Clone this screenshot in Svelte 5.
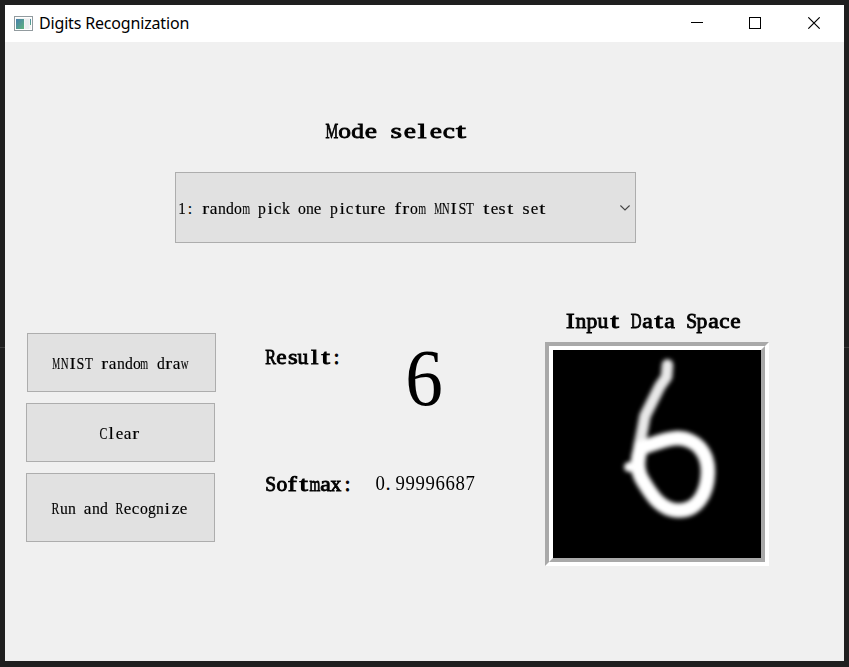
<script>
  // Monospaced serif lettering: every glyph sits centred in a fixed cell and
  // is scaled from its natural width (in em) to a share of that cell.
  const widths = {
    a: 0.444, c: 0.444, e: 0.444, z: 0.444, f: 0.333, r: 0.333, s: 0.389, i: 0.278, l: 0.278, t: 0.278,
    m: 0.778, w: 0.722, C: 0.667, D: 0.722, I: 0.333, M: 0.889, N: 0.722, R: 0.667, S: 0.556, T: 0.611,
    ' ': 0.25, '.': 0.25, ':': 0.278
  };
  const shares = { i: 0.68, l: 0.68, I: 0.78, r: 0.86, t: 0.76, f: 0.82, s: 0.88, c: 0.93, e: 0.94, a: 0.96 };
  const actions = [
    { label: 'MNIST random draw', kind: 'draw' },
    { label: 'Clear', kind: 'clear' },
    { label: 'Run and Recognize', kind: 'run' }
  ];

  function glyphStyle(ch, pitch, size) {
    const natural = (widths[ch] ?? 0.5) * size;
    let target = pitch * (shares[ch] ?? 0.98);
    if (ch === ' ' || ch === '.' || ch === ':') target = natural;
    if (/[0-9]/.test(ch)) target = pitch * 0.94;
    const shift = ch === '.' ? -0.18 * pitch : 0;
    const side = (pitch - natural) / 2;
    return `width:${natural}px;margin:0 ${side - shift}px 0 ${side + shift}px;transform:scaleX(${target / natural})`;
  }
</script>

{#snippet mono(text, pitch, size, bold = false)}
  <div class="mono" class:bold class:small={size === 16} style="font-size:{size}px;line-height:{size}px">{#each text as ch}<span style={glyphStyle(ch, pitch, size)}>{ch}</span>{/each}</div>
{/snippet}

<div class="desktop">
  <div class="window">
    <header>
      <svg class="app-icon" width="19" height="15" viewBox="0 0 19 15">
        <defs>
          <linearGradient id="pane" x1="0" y1="0" x2="1" y2="1">
            <stop offset="0" stop-color="#477fae" />
            <stop offset="1" stop-color="#5fb37c" />
          </linearGradient>
        </defs>
        <rect x=".5" y=".5" width="18" height="14" fill="#f4f4f4" stroke="#929b9f" />
        <rect x="1.5" y="1.5" width="16" height="12" fill="none" stroke="#fff" />
        <rect x="2" y="3" width="8" height="10" fill="url(#pane)" />
        <rect x="11" y="3" width="4" height="10" fill="#eaedef" />
        <rect x="16" y="3" width="1" height="6" fill="url(#pane)" />
      </svg>
      <h1>Digits Recognization</h1>
      <svg class="controls" width="130" height="12" viewBox="0 0 130 12" fill="none" stroke="#000">
        <path d="M0 5.5h12M58.5.5h11v11h-11z" shape-rendering="crispEdges" />
        <path d="M117.3.3l11.4 11.4M128.7.3l-11.4 11.4" stroke-width="1.1" />
      </svg>
    </header>

    <section class="mode">
      <div class="heading">{@render mono('Mode select', 13, 22, true)}</div>
      <div class="combo">
        {@render mono('1: random pick one picture from MNIST test set', 8.02, 16)}
        <svg width="10" height="6" viewBox="0 0 10 6" fill="none" stroke="#444" stroke-width="1.1">
          <path d="M.4.5L5 5 9.6.5" />
        </svg>
      </div>
    </section>

    <main>
      <nav>
        {#each actions as { label, kind }}
          <button class={kind}>{@render mono(label, 8, 16)}</button>
        {/each}
      </nav>

      <section class="results">
        <div class="result">
          {@render mono('Result:', 11, 20, true)}
          <div class="digit">{@render mono('6', 40, 80)}</div>
        </div>
        <div class="softmax">
          {@render mono('Softmax:', 11, 20, true)}
          <div class="value">{@render mono('0.99996687', 10, 20.5)}</div>
        </div>
      </section>

      <section class="input">
        <div class="caption">{@render mono('Input Data Space', 11, 20, true)}</div>
        <div class="frame">
          <svg class="canvas" width="208" height="208" viewBox="0 0 208 208">
            <defs>
              <filter id="soft" filterUnits="userSpaceOnUse" x="0" y="0" width="208" height="208"><feGaussianBlur stdDeviation="2.3" /></filter>
            </defs>
            <rect width="208" height="208" fill="#000" />
            <g filter="url(#soft)" fill="none" stroke="#fff" stroke-linecap="round" stroke-linejoin="round">
              <path stroke-width="11.500" stroke="#e8e8e8" d="M114.500 15L113.500 27L107 36L99 52L92 66L89 82L86 97" />
              <path stroke-width="14.500" d="M88 98C84 109 83 120 90 131C99 146 108 160 125 160.500C143 161 154.500 145 155 122C155 102 143 89 125 88C110 89 101 94 88 98" />
              <path stroke-width="10" d="M76 117L86 117" />
            </g>
          </svg>
        </div>
      </section>
    </main>
  </div>
</div>

<style>
  .desktop {
    box-sizing: border-box;
    width: 849px;
    height: 667px;
    padding: 5px 5px 6px;
    background: linear-gradient(#1f1f1f 347px, #3b3b3b 347px, #3b3b3b 348px, #1f1f1f 348px);
    overflow: hidden;
  }
  .window {
    height: 656px;
    background: #f0f0f0;
    color: #000;
  }
  svg {
    display: block;
    flex: none;
  }
  .mono {
    display: flex;
    flex: none;
    color: #000;
    font-family: 'Liberation Serif', serif;
    white-space: pre;
  }
  .mono span {
    display: block;
    flex: none;
  }
  .small {
    -webkit-text-stroke: 0.15px #000;
  }
  .bold {
    -webkit-text-stroke: 0.85px #000;
  }
  header {
    display: flex;
    align-items: center;
    box-sizing: border-box;
    height: 37px;
    padding: 0 23px 1px 9px;
    background: #fff;
  }
  h1 {
    margin: 0 auto 0 6px;
    font: 400 16px 'Noto Sans', sans-serif;
    letter-spacing: -0.17px;
  }
  .mode {
    display: flex;
    flex-direction: column;
    align-items: center;
    gap: 30px;
    height: 291px;
    box-sizing: border-box;
    padding: 78px 38px 0 0;
  }
  .heading {
    margin-right: 18px;
  }
  .combo {
    display: flex;
    align-items: center;
    justify-content: space-between;
    box-sizing: border-box;
    width: 461px;
    height: 71px;
    padding: 0 5px 0 2px;
    border: 1px solid #adadad;
    background: #e1e1e1;
  }
  .combo .mono {
    padding-top: 2px;
  }
  main {
    display: flex;
    padding-left: 21px;
  }
  nav {
    display: flex;
    flex-direction: column;
    gap: 11px;
    width: 239px;
  }
  button {
    display: flex;
    align-items: center;
    justify-content: center;
    box-sizing: border-box;
    width: 189px;
    height: 59px;
    padding: 3px 2px 0 0;
    border: 1px solid #adadad;
    background: #e1e1e1;
  }
  .draw {
    margin-left: 1px;
  }
  .run {
    height: 69px;
  }
  .results {
    width: 280px;
  }
  .result,
  .softmax {
    display: flex;
  }
  .result {
    height: 127px;
    padding-top: 14px;
  }
  .digit {
    margin: -9px 0 0 62px;
  }
  .value {
    margin: -1px 0 0 22px;
  }
  .input {
    display: flex;
    flex-direction: column;
    align-items: flex-start;
    gap: 11px;
    margin-top: -22px;
  }
  .caption {
    margin-left: 20px;
  }
  .frame,
  .canvas {
    border: 4px solid;
  }
  .frame {
    border-color: #a9a9a9 #fff #fff #a9a9a9;
  }
  .canvas {
    border-color: #fff #a9a9a9 #a9a9a9 #fff;
  }
</style>
